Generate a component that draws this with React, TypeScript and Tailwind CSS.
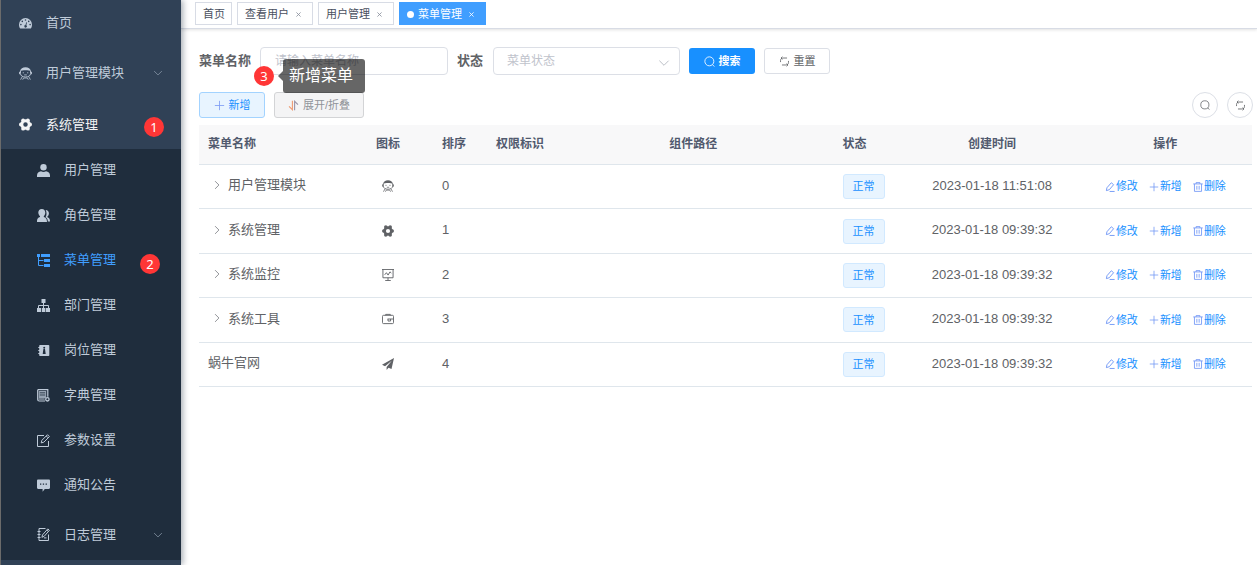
import type { ReactNode } from "react";

type IconProps = { className?: string };

function Svg({ className = "size-[13px]", children }: { className?: string; children: ReactNode }) {
  return (
    <svg viewBox="0 0 13 13" className={`shrink-0 ${className}`} fill="none" stroke="none" aria-hidden="true">
      {children}
    </svg>
  );
}

const DashboardIcon = ({ className }: IconProps) => (
  <Svg className={className}>
    <path
      fill="currentColor"
      fillRule="evenodd"
      d="M6.5 1A6.5 6.5 0 0 0 0 7.500c0 1.300.3 2.700 1 3.700.1.200.3.300.5.300h10c.2 0 .4-.1.500-.3.700-1 1-2.400 1-3.700A6.500 6.500 0 0 0 6.500 1zM1.100 7.600a.8.8 0 1 1 1.600 0 .8.8 0 0 1-1.600 0zM2.500 4.400a.8.8 0 1 1 1.600 0 .8.8 0 0 1-1.600 0zM5.700 3a.8.8 0 1 1 1.600 0 .8.8 0 0 1-1.600 0zM8.900 4.400a.8.8 0 1 1 1.600 0 .8.8 0 0 1-1.600 0zM10.300 7.600a.8.8 0 1 1 1.600 0 .8.8 0 0 1-1.600 0zM7.200 5.200l.8.200-.7 2.800a1.300 1.300 0 1 1-.8-.2z"
    />
  </Svg>
);

const FaceIcon = ({ className }: IconProps) => (
  <Svg className={className}>
    <path d="M1 4.300C1.600 1.700 3.700.2 6.500.2s4.900 1.500 5.500 4.100c-1.500-.8-3.300-1.100-5.500-1.100S2.500 3.500 1 4.300z" fill="currentColor" />
    <path d="M1.500 4v2.600c0 2.100 2 3.400 5 3.400s5-1.300 5-3.400V4" stroke="currentColor" strokeWidth="0.9" />
    <path d="M.5 4.800v2.400M12.500 4.800v2.400" stroke="currentColor" strokeWidth="0.9" />
    <path d="M3.700 5.800H5M8 5.800h1.300M5.200 7.900h2.600" stroke="currentColor" strokeWidth="0.8" />
    <path d="M3.300 9.500L1.600 12.700M9.700 9.500l1.700 3.200M3.700 12.700l.9-1.700h3.800l.9 1.700" stroke="currentColor" strokeWidth="0.8" />
  </Svg>
);

const GearIcon = ({ className }: IconProps) => (
  <Svg className={className}>
    <circle cx="6.5" cy="6.5" r="3.700" stroke="currentColor" strokeWidth="2.900" />
    <g fill="currentColor">
      <circle cx="1.900" cy="6.500" r="1.900" />
      <circle cx="11.100" cy="6.500" r="1.900" />
      <circle cx="4.100" cy="2.300" r="1.900" />
      <circle cx="8.900" cy="2.300" r="1.900" />
      <circle cx="4.100" cy="10.700" r="1.900" />
      <circle cx="8.900" cy="10.700" r="1.900" />
    </g>
  </Svg>
);

const UserIcon = ({ className }: IconProps) => (
  <Svg className={className}>
    <ellipse cx="6.500" cy="3.300" rx="3.200" ry="3.300" fill="currentColor" />
    <path d="M0 13v-1.500C0 9 1.800 7.600 4 7.300c1.500 1 3.500 1 5 0 2.200.3 4 1.700 4 4.200V13z" fill="currentColor" />
  </Svg>
);

const PeoplesIcon = ({ className }: IconProps) => (
  <Svg className={className}>
    <path d="M4.800 0c2.200 0 3.500 1.500 3.500 3.600 0 1.500-.6 2.900-1.500 3.600v.8c1.800.6 3.200 1.500 3.200 5H0c0-3.500 1.100-4.400 3-5v-.8C2 6.500 1.300 5.100 1.300 3.600 1.300 1.500 2.600 0 4.800 0z" fill="currentColor" />
    <path d="M8.700.9c1.900.1 3.200 1.500 3.200 3.300 0 1.400-.6 2.600-1.500 3.300v.8c1.600.6 2.600 1.500 2.600 4.200h-2.200c0-2-.5-3.300-2.300-4.200.6-.8 1-2 1-3.700 0-1.500-.2-2.700-.8-3.700z" fill="currentColor" />
  </Svg>
);

const TreeTableIcon = ({ className }: IconProps) => (
  <Svg className={className}>
    <path d="M0 0h3v3H0zM4 0h9v3H4zM7 5h6v3H7zM7 10h6v3H7z" fill="currentColor" />
    <path d="M1.500 3v8.500H6.500M1.500 6.500h5" stroke="currentColor" />
  </Svg>
);

const OrgIcon = ({ className }: IconProps) => (
  <Svg className={className}>
    <path d="M4.500 0h4v4h-4zM0 9h4v4H0zM4.800 9h3.600v4H4.800zM9 9h4v4H9z" fill="currentColor" />
    <path d="M6.500 4v5M1.500 9V6.500h10V9" stroke="currentColor" />
  </Svg>
);

const PostIcon = ({ className }: IconProps) => (
  <Svg className={className}>
    <path
      fill="currentColor"
      fillRule="evenodd"
      d="M3 1h8.500c.5 0 .8.300.8.800v9.400c0 .5-.3.800-.8.800H3c-.5 0-.8-.3-.8-.8V10h-.9V9h.9V7.100h-.9V6h.9V4.100h-.9V3h.9V1.800c0-.5.300-.8.800-.8zM7.200 2.800a1 1 0 1 0 0 2 1 1 0 0 0 0-2zM6.400 5.100L5.700 10h3l-.7-4.900z"
    />
  </Svg>
);

const DictIcon = ({ className }: IconProps) => (
  <Svg className={className}>
    <path d="M.7.700h10.100v7.100M.7.700v9.800c0 1 .5 1.500 1.500 1.500H8M1.700 10h6" stroke="currentColor" strokeWidth="1.200" />
    <path d="M1.800 2h7.400v7H1.800z" fill="currentColor" opacity="0.75" />
    <path d="M2.800 3.800h5.300M2.800 6h5.300" stroke="#1f2d3d" strokeWidth="0.8" />
    <circle cx="10.400" cy="10.300" r="1.700" stroke="currentColor" strokeWidth="1.300" />
  </Svg>
);

const EditIcon = ({ className }: IconProps) => (
  <Svg className={className}>
    <path d="M7 1.500H.5v11h11V7" stroke="currentColor" />
    <path d="M4.200 8.900l.7-2.600L10.500.7l1.900 1.900-5.600 5.600zM9.300 2l1.800 1.800" stroke="currentColor" strokeWidth="1" />
  </Svg>
);

const MessageIcon = ({ className }: IconProps) => (
  <Svg className={className}>
    <path
      fill="currentColor"
      fillRule="evenodd"
      d="M1.200.500h10.600c.7 0 1.200.5 1.200 1.200v7.100c0 .7-.5 1.200-1.200 1.200H7.800L5.600 12.800V10H1.200C.5 10 0 9.500 0 8.800V1.700C0 1 .5.500 1.200.500zM3 4.500v1.300h1.300V4.500zM5.800 4.500v1.300h1.300V4.500zM8.600 4.500v1.300h1.300V4.500z"
    />
  </Svg>
);

const LogIcon = ({ className }: IconProps) => (
  <Svg className={className}>
    <path d="M8.500.500h-6.500v12h9.500V6.500M.5 3.500h3M.5 6.500h3M.5 9.500h3" stroke="currentColor" />
    <path d="M4.900 9.300l.6-2.400L10.800.9l1.600 1.400-5.200 6zM9.800 2l1.500 1.400M7 9.900h2.500" stroke="currentColor" strokeWidth="1" />
  </Svg>
);

const MonitorIcon = ({ className }: IconProps) => (
  <Svg className={className}>
    <path d="M0 .5h13M1 .5v9h11v-9M6.500 9.500v3M3.500 12.500h6" stroke="currentColor" />
    <path d="M2.900 6.300l1.900-2.300 1.800 2.600 2-3.500 1.500 1.300" stroke="currentColor" />
  </Svg>
);

const ToolIcon = ({ className }: IconProps) => (
  <Svg className={className}>
    <rect x="0.500" y="2.500" width="12" height="9" rx="1.200" stroke="currentColor" />
    <path d="M4 2.500v-1h5v1M6 6.500h6.500M6.500 6.500v2.200h2.800V6.500" stroke="currentColor" />
  </Svg>
);

const GuideIcon = ({ className }: IconProps) => (
  <Svg className={className}>
    <path d="M13 0L0 7.400l3.300 1.500L10.600 3 5 9.700v3.300l2-2.400 3.300 1.400z" fill="currentColor" />
  </Svg>
);

const SearchIcon = ({ className }: IconProps) => (
  <Svg className={className}>
    <circle cx="6.300" cy="6.300" r="5.300" stroke="currentColor" />
    <path d="M10 10.200l2.200 2.300" stroke="currentColor" />
  </Svg>
);

const RefreshIcon = ({ className }: IconProps) => (
  <Svg className={className}>
    <path d="M1.800 7.200V5.400c0-1.800 1.200-3 3-3H9.500M4 .8L2.400 2.400 4 4M11.200 5.800v1.800c0 1.800-1.200 3-3 3H3.500M9 9l1.600 1.600L9 12.200" stroke="currentColor" />
  </Svg>
);

const PlusIcon = ({ className }: IconProps) => (
  <Svg className={className}>
    <path d="M6.500 1v11M1 6.500h11" stroke="currentColor" />
  </Svg>
);

const SortIcon = ({ className }: IconProps) => (
  <Svg className={className}>
    <path d="M5.200 1v10.500L1.200 7.500" stroke="#ee9a72" strokeWidth="1.300" />
    <path d="M7.800 12V1.500l4 4" stroke="#9a93a8" strokeWidth="1.300" />
  </Svg>
);

const PenIcon = ({ className }: IconProps) => (
  <Svg className={className}>
    <path d="M1.800 11.200l.7-3.700L8.200 1l3 2.500-5.600 6.500zM6 12.300h6.500" stroke="currentColor" strokeWidth="1.200" />
  </Svg>
);

const TrashIcon = ({ className }: IconProps) => (
  <Svg className={className}>
    <path d="M.3 2.500h12.400M4 2.500V.8h5v1.700M1.900 2.500v9.700h9.200V2.500M5 5v5M8 5v5" stroke="currentColor" strokeWidth="1.100" />
  </Svg>
);

const ChevronIcon = ({ className }: IconProps) => (
  <Svg className={className}>
    <path d="M1.500 4l5 5 5-5" stroke="currentColor" />
  </Svg>
);

type MenuItem = { label: string; icon: (p: IconProps) => ReactNode };

const subMenu: MenuItem[] = [
  { label: "用户管理", icon: UserIcon },
  { label: "角色管理", icon: PeoplesIcon },
  { label: "菜单管理", icon: TreeTableIcon },
  { label: "部门管理", icon: OrgIcon },
  { label: "岗位管理", icon: PostIcon },
  { label: "字典管理", icon: DictIcon },
  { label: "参数设置", icon: EditIcon },
  { label: "通知公告", icon: MessageIcon },
];

const tabs = [
  { label: "首页", closable: false, active: false },
  { label: "查看用户", closable: true, active: false },
  { label: "用户管理", closable: true, active: false },
  { label: "菜单管理", closable: true, active: true },
];

const rows = [
  { name: "用户管理模块", icon: FaceIcon, order: 0, time: "2023-01-18 11:51:08", expandable: true },
  { name: "系统管理", icon: GearIcon, order: 1, time: "2023-01-18 09:39:32", expandable: true },
  { name: "系统监控", icon: MonitorIcon, order: 2, time: "2023-01-18 09:39:32", expandable: true },
  { name: "系统工具", icon: ToolIcon, order: 3, time: "2023-01-18 09:39:32", expandable: true },
  { name: "蜗牛官网", icon: GuideIcon, order: 4, time: "2023-01-18 09:39:32", expandable: false },
];

const actions = [
  { label: "修改", icon: PenIcon },
  { label: "新增", icon: PlusIcon },
  { label: "删除", icon: TrashIcon },
];

function Step({ n, className }: { n: number; className: string }) {
  return (
    <span
      className={`absolute z-20 flex size-5 items-center justify-center rounded-full bg-[#ff3636] font-['Noto_Sans',sans-serif] text-[13px] leading-5 text-white ${className}`}
    >
      {n}
    </span>
  );
}

function Sidebar() {
  return (
    <nav className="relative z-10 w-[181px] shrink-0 border-l border-[#6b6b6b] bg-[#304156] text-[13px] text-[#bfcbd9] shadow-[2px_0_6px_rgba(0,21,41,0.35)]">
      <a href="#home" className="flex h-[50px] items-center gap-[14px] pb-1 pl-[18px]">
        <DashboardIcon />
        首页
      </a>
      <button type="button" className="flex h-[50px] w-full items-center gap-[14px] pr-[18px] pb-1 pl-[18px]">
        <FaceIcon />
        用户管理模块
        <ChevronIcon className="ml-auto size-[10px] text-[#8c9aab]" />
      </button>
      <button type="button" className="relative flex h-[49px] w-full items-center gap-[14px] pl-[18px] text-[#f4f4f5]">
        <GearIcon />
        系统管理
        <Step n={1} className="top-[17px] right-[17px]" />
      </button>
      <ul className="bg-[#1f2d3d]">
        {subMenu.map(({ label, icon: Icon }) => (
          <li key={label}>
            <a
              href={`#${label}`}
              className={`relative flex h-[45px] items-center gap-[14px] pb-[3px] pl-9 ${label === "菜单管理" ? "text-[#409eff]" : ""}`}
            >
              <Icon />
              {label}
              {label === "菜单管理" && <Step n={2} className="top-[15px] right-[21px]" />}
            </a>
          </li>
        ))}
        <li>
          <button type="button" className="flex h-[51px] w-full items-center gap-[14px] pr-[18px] pl-9">
            <LogIcon />
            日志管理
            <ChevronIcon className="ml-auto size-[10px] text-[#8c9aab]" />
          </button>
        </li>
      </ul>
    </nav>
  );
}

function TabBar() {
  return (
    <div className="flex h-[29px] items-start gap-[5px] border-b border-[#d8dce5] pt-[2px] pl-[14px] text-[11px] shadow-[0_1px_3px_rgba(0,0,0,0.12)]">
      {tabs.map((t) => (
        <div
          key={t.label}
          className={`flex h-[23px] items-center border pt-px pl-[7px] ${t.closable ? "pr-[7px]" : "pr-[6px]"} ${
            t.active ? "border-[#409eff] bg-[#409eff] text-white" : "border-[#d8dce5] bg-white text-[#495060]"
          }`}
        >
          {t.active && <span className="mr-1 size-[7px] rounded-full bg-white" />}
          <a href={`#${t.label}`}>{t.label}</a>
          {t.closable && (
            <button type="button" aria-label={`关闭${t.label}`} className="ml-[3px] flex h-[14px] w-[13px] items-center justify-center">
              <svg viewBox="0 0 6 6" className={`size-[5px] ${t.active ? "text-white" : "text-[#8a909c]"}`} aria-hidden="true">
                <path d="M.5.500l5 5M5.500.500l-5 5" stroke="currentColor" strokeWidth="1" />
              </svg>
            </button>
          )}
        </div>
      ))}
    </div>
  );
}

function SearchForm() {
  return (
    <form className="flex h-7 items-center text-[13px]" onSubmit={(e) => e.preventDefault()}>
      <label htmlFor="menuName" className="mr-[9px] font-bold text-[#606266]">
        菜单名称
      </label>
      <input
        id="menuName"
        type="text"
        placeholder="请输入菜单名称"
        className="h-7 w-[188px] rounded-[4px] border border-[#dcdfe6] bg-white px-[14px] text-[12px] outline-none placeholder:text-[#bfc3cc]"
      />
      <label htmlFor="status" className="mr-[10px] ml-[9px] font-bold text-[#606266]">
        状态
      </label>
      <div className="relative">
        <select
          id="status"
          defaultValue=""
          className="block h-7 w-[187px] appearance-none rounded-[4px] border border-[#dcdfe6] bg-white px-[13px] text-[12px] text-[#bfc3cc] outline-none"
        >
          <option value="">菜单状态</option>
          <option value="0">正常</option>
          <option value="1">停用</option>
        </select>
        <ChevronIcon className="pointer-events-none absolute top-[10px] right-[10px] size-3 text-[#b4b8c0]" />
      </div>
      <button
        type="submit"
        className="ml-[9px] flex h-[26px] w-[66px] items-center justify-center gap-1 rounded-[3px] bg-[#1890ff] text-[11px] font-bold text-white"
      >
        <SearchIcon className="size-[11px]" />
        搜索
      </button>
      <button
        type="reset"
        className="ml-[9px] flex h-[26px] w-[66px] items-center justify-center gap-1 rounded-[3px] border border-[#dcdfe6] bg-white text-[11px] text-[#606266]"
      >
        <RefreshIcon className="size-[11px]" />
        重置
      </button>
    </form>
  );
}

function Toolbar() {
  return (
    <div className="relative mt-[17px] flex h-[26px] items-center text-[11px]">
      <button
        type="button"
        className="flex h-[26px] w-[66px] items-center justify-center gap-1 rounded-[3px] border border-[#a3d3ff] bg-[#e8f4ff] text-[#1890ff]"
      >
        <PlusIcon className="size-[11px] text-[#7f9cf5]" />
        新增
      </button>
      <button
        type="button"
        className="ml-[9px] flex h-[26px] w-[90px] items-center justify-center gap-1 rounded-[3px] border border-[#d3d4d6] bg-[#f4f4f5] text-[#909399]"
      >
        <SortIcon className="size-[11px]" />
        展开/折叠
      </button>
      <Step n={3} className="-top-[26px] left-[55px]" />
      <div
        role="tooltip"
        className="absolute -top-[33px] left-[84px] z-20 flex h-[34px] w-[82px] items-center rounded-[3px] bg-black/60 pl-[6px] text-[16px] text-white"
      >
        <span className="absolute top-3 -left-[5px] border-y-[5px] border-r-[5px] border-y-transparent border-r-black/60" />
        新增菜单
      </div>
      <div className="-mr-px ml-auto flex gap-[9px] text-[#606266]">
        <button type="button" aria-label="搜索" className="flex size-[26px] items-center justify-center rounded-full border border-[#dcdfe6] bg-white">
          <SearchIcon className="size-[10px]" />
        </button>
        <button type="button" aria-label="刷新" className="flex size-[26px] items-center justify-center rounded-full border border-[#dcdfe6] bg-white">
          <RefreshIcon className="size-[11px]" />
        </button>
      </div>
    </div>
  );
}

function MenuTable() {
  return (
    <table className="mt-[7px] h-[262px] w-full table-fixed border-separate border-spacing-0 text-[13px] text-[#606266]">
      <colgroup>
        <col className="w-[144px]" />
        <col className="w-[90px]" />
        <col className="w-[54px]" />
        <col />
        <col />
        <col className="w-[72px]" />
        <col />
        <col />
      </colgroup>
      <thead>
        <tr className="h-10 bg-[#f8f8f9] text-left text-[12px] text-[#515a6e] [&>th]:border-b [&>th]:border-[#dfe6ec] [&>th]:px-[9px] [&>th]:pb-px">
          <th>菜单名称</th>
          <th className="text-center">图标</th>
          <th>排序</th>
          <th>权限标识</th>
          <th>组件路径</th>
          <th>状态</th>
          <th className="text-center">创建时间</th>
          <th className="text-center">操作</th>
        </tr>
      </thead>
      <tbody>
        {rows.map(({ name, icon: Icon, order, time, expandable }) => (
          <tr key={name} className="[&>td]:border-b [&>td]:border-[#dfe6ec] [&>td]:px-[9px]">
            <td>
              <div className="flex items-center pb-[3px]">
                {expandable && (
                  <button type="button" aria-label={`展开${name}`} className="mr-[6px] ml-[3px] flex h-4 w-[11px] items-center justify-center">
                    <ChevronIcon className="size-[10px] -rotate-90 text-[#707378]" />
                  </button>
                )}
                {name}
              </div>
            </td>
            <td>
              <div className="flex justify-center pr-px pb-px">
                <Icon className="size-3" />
              </div>
            </td>
            <td>
              <div className="pb-[2px]">{order}</div>
            </td>
            <td />
            <td />
            <td>
              <span className="flex h-[25px] w-[42px] items-center justify-center rounded-[3px] border border-[#d1e9ff] bg-[#e8f4ff] text-[11px] text-[#1890ff]">
                正常
              </span>
            </td>
            <td>
              <div className="pb-[2px] text-center whitespace-nowrap">{time}</div>
            </td>
            <td>
              <div className="flex items-center justify-center gap-[11px] text-[11px] text-[#1890ff]">
                {actions.map(({ label, icon: ActionIcon }) => (
                  <button key={label} type="button" className="flex items-center gap-px whitespace-nowrap">
                    <ActionIcon className="size-[10px] text-[#6f96f5]" />
                    {label}
                  </button>
                ))}
              </div>
            </td>
          </tr>
        ))}
      </tbody>
    </table>
  );
}

export default function App() {
  return (
    <div className="flex min-h-screen bg-white font-['Liberation_Sans','Noto_Sans_CJK_SC',sans-serif]">
      <Sidebar />
      <div className="min-w-0 flex-1">
        <TabBar />
        <main className="pt-[18px] pr-[5px] pl-[18px]">
          <SearchForm />
          <Toolbar />
          <MenuTable />
        </main>
      </div>
    </div>
  );
}
